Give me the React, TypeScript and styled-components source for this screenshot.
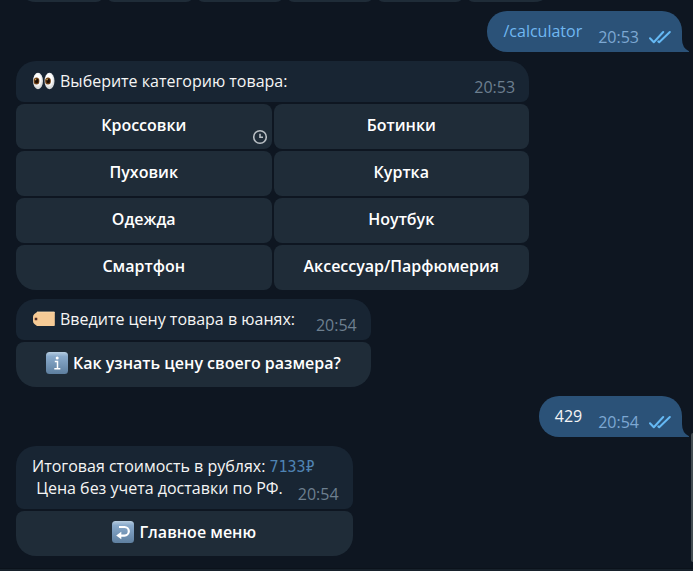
import React from "react";
import styled, { createGlobalStyle } from "styled-components";

const Global = createGlobalStyle`
  *, *::before, *::after { box-sizing: border-box; }
  body {
    margin: 0;
    background: #0e1621;
    color: #f5f5f5;
    font: 16px/22px "Open Sans", "Noto Sans", sans-serif;
  }
`;

const Page = styled.div`
  position: relative;
  min-height: 100vh;
  display: flex;
  flex-direction: column;
  overflow: hidden;
`;

const Chat = styled.main`
  flex: 1;
  display: flex;
  flex-direction: column;
  gap: 9px;
  padding: 0 11px 12px 16px;
`;

const ClippedRow = styled.div`
  display: grid;
  grid-template-columns: repeat(6, 1fr);
  gap: 2px;
  align-content: end;
  width: 100%;
  max-width: 538px;
  height: 2px;
  overflow: hidden;
`;

const ClippedKey = styled.div`
  height: 45px;
  border-radius: 8px;
  background: #1f2c38;
  &:first-child { border-bottom-left-radius: 20px; }
  &:last-child { border-bottom-right-radius: 20px; }
`;

const Card = styled.section`
  align-self: flex-start;
  display: flex;
  flex-direction: column;
  gap: 2px;
  max-width: 100%;
`;

const CardHead = styled.div`
  padding: 9px 14px 4px 16px;
  border-radius: 20px 20px 8px 8px;
  background: #182533;
`;

const Line = styled.div`
  height: 22px;
`;

const LastLine = styled.div`
  display: flex;
  justify-content: space-between;
  align-items: flex-end;
  gap: 15px;
`;

const MessageText = styled.p`
  display: flex;
  align-items: center;
  gap: 5px;
  margin: 0 0 6px;
  white-space: pre-wrap;
`;

const Time = styled.time<{ $own?: boolean }>`
  color: ${(p) => (p.$own ? "#7da8d3" : "#6d7f8f")};
`;

const Price = styled.code`
  color: #4f83b3;
  font-family: "DejaVu Sans Mono", monospace;
  font-size: 15px;
  line-height: 1;
`;

const Keyboard = styled.div<{ $columns: number }>`
  display: grid;
  grid-template-columns: repeat(${(p) => p.$columns}, 1fr);
  gap: 2px;
  border-radius: 0 0 20px 20px;
  overflow: hidden;
`;

const Key = styled.button`
  position: relative;
  display: flex;
  align-items: center;
  justify-content: center;
  gap: 5px;
  min-height: 45px;
  padding: 10px 30px 13px;
  border: 0;
  border-radius: 8px;
  background: #1f2c38;
  color: #ffffff;
  font: inherit;
  font-weight: 600;
  cursor: pointer;
  &:hover { background: #263542; }
`;

const Pending = styled.svg`
  position: absolute;
  right: 4px;
  bottom: 4px;
`;

const OwnBubble = styled.section`
  position: relative;
  align-self: flex-end;
  display: flex;
  align-items: flex-end;
  padding: 9px 11px 4px 16px;
  border-radius: 20px 20px 0 20px;
  background: #2b5278;
`;

const OwnText = styled.span`
  margin: 0 16px 6px 0;
`;

const Command = styled.a`
  margin: 0 16px 6px 0;
  color: #70b8f2;
  text-decoration: none;
`;

const Checks = styled.svg`
  margin: 0 0 4px 10px;
`;

const Tail = styled.svg`
  position: absolute;
  left: 100%;
  bottom: 0;
`;

const ScrollThumb = styled.div`
  position: absolute;
  right: 0;
  bottom: 9px;
  width: 2px;
  height: 129px;
  border-radius: 2px 0 0 2px;
  background: #434d53;
`;

const Composer = styled.footer`
  height: 3px;
  background: #17212b;
  border-top: 1px solid #0b121b;
`;

const Eyes = () => (
  <svg width="23" height="22" viewBox="0 0 23 22" aria-hidden="true">
    <defs>
      <radialGradient id="eyeWhite" cx="45%" cy="40%">
        <stop offset="0.6" stopColor="#ffffff" />
        <stop offset="1" stopColor="#d9dbdc" />
      </radialGradient>
    </defs>
    {[0, 11.5].map((x) => (
      <g key={x}>
        <ellipse cx={x + 6} cy="11" rx="5" ry="8.2" fill="url(#eyeWhite)" />
        <ellipse cx={x + 4.5} cy="11" rx="2.9" ry="3.5" fill="#704015" />
        <ellipse cx={x + 4.7} cy="11" rx="1.8" ry="2.3" fill="#1c0d04" />
        <circle cx={x + 3.6} cy="9.6" r="0.8" fill="#d0a95a" />
      </g>
    ))}
  </svg>
);

const Tag = () => (
  <svg width="23" height="22" viewBox="0 0 23 22" aria-hidden="true">
    <path d="M5 4h17q.8 0 .8.8v12.4q0 .8-.8.8H5L2.4 16Q1 14.8 1 13V9q0-1.800 1.400-3Z" fill="#f6cb96" />
    <path d="M5 4h17q.8 0 .8.8" fill="none" stroke="#ffe0b5" strokeWidth="0.8" />
    <circle cx="4" cy="11" r="2" fill="#e5ad7b" />
    <circle cx="4" cy="11" r="1.3" fill="#4b302a" />
  </svg>
);

const BlueTile = ({ id, children }: { id: string; children: React.ReactNode }) => (
  <svg width="22" height="22" viewBox="0 0 22 22" aria-hidden="true">
    <defs>
      <linearGradient id={id} x1="0" y1="0" x2="0" y2="1">
        <stop offset="0" stopColor="#b7cde0" />
        <stop offset="0.2" stopColor="#89aacb" />
        <stop offset="1" stopColor="#5e7f9f" />
      </linearGradient>
    </defs>
    <rect width="22" height="22" rx="3.500" fill={`url(#${id})`} />
    {children}
  </svg>
);

const InfoIcon = () => (
  <BlueTile id="infoTile">
    <circle cx="11.200" cy="5.900" r="1.500" fill="#fff" />
    <path d="M8.800 9.400h2.700v7.300M8.300 16.800h6" fill="none" stroke="#fff" strokeWidth="1.500" />
  </BlueTile>
);

const BackIcon = () => (
  <BlueTile id="backTile">
    <path d="M7 6h5.500a4.300 4.300 0 0 1 0 8.600H8" fill="none" stroke="#fff" strokeWidth="2.200" />
    <path d="M9.300 10.800v7.400L4.200 14.500Z" fill="#fff" />
  </BlueTile>
);

const ReadMark = () => (
  <Checks width="22" height="14" viewBox="0 0 22 14" role="img" aria-label="Прочитано">
    <path
      d="M1 8.200l3.800 4L14.200 2M9.300 11.400l.9.800L20.800 2"
      fill="none"
      stroke="#65b9f4"
      strokeWidth="2"
      strokeLinecap="round"
      strokeLinejoin="round"
    />
  </Checks>
);

const BubbleTail = () => (
  <Tail width="7" height="13" viewBox="0 0 7 13" aria-hidden="true">
    <path d="M0 0Q0 9 7 12.200V13H0Z" fill="#2b5278" />
  </Tail>
);

const categories = [
  "Кроссовки",
  "Ботинки",
  "Пуховик",
  "Куртка",
  "Одежда",
  "Ноутбук",
  "Смартфон",
  "Аксессуар/Парфюмерия",
];

export default function App() {
  return (
    <>
      <Global />
      <Page>
        <Chat>
          <ClippedRow>
            {[1, 2, 3, 4, 5, 6].map((n) => (
              <ClippedKey key={n} />
            ))}
          </ClippedRow>

          <OwnBubble>
            <Command href="#calculator">/calculator</Command>
            <Time $own>20:53</Time>
            <ReadMark />
            <BubbleTail />
          </OwnBubble>

          <Card>
            <CardHead>
              <LastLine>
                <MessageText>
                  <Eyes />
                  Выберите категорию товара:
                </MessageText>
                <Time>20:53</Time>
              </LastLine>
            </CardHead>
            <Keyboard $columns={2}>
              {categories.map((name, i) => (
                <Key key={name} type="button">
                  {name}
                  {i === 0 && (
                    <Pending width="16" height="16" viewBox="0 0 16 16" aria-hidden="true">
                      <circle cx="8" cy="8" r="6.300" fill="none" stroke="#b9bfc4" strokeWidth="1.600" />
                      <path d="M8 4.800V8.300h3" fill="none" stroke="#b9bfc4" strokeWidth="1.600" />
                    </Pending>
                  )}
                </Key>
              ))}
            </Keyboard>
          </Card>

          <Card>
            <CardHead>
              <LastLine>
                <MessageText>
                  <Tag />
                  Введите цену товара в юанях:
                </MessageText>
                <Time>20:54</Time>
              </LastLine>
            </CardHead>
            <Keyboard $columns={1}>
              <Key type="button">
                <InfoIcon />
                Как узнать цену своего размера?
              </Key>
            </Keyboard>
          </Card>

          <OwnBubble>
            <OwnText>429</OwnText>
            <Time $own>20:54</Time>
            <ReadMark />
            <BubbleTail />
          </OwnBubble>

          <Card>
            <CardHead>
              <Line>
                Итоговая стоимость в рублях: <Price>7133₽</Price>
              </Line>
              <LastLine>
                <MessageText>{" Цена без учета доставки по РФ."}</MessageText>
                <Time>20:54</Time>
              </LastLine>
            </CardHead>
            <Keyboard $columns={1}>
              <Key type="button">
                <BackIcon />
                Главное меню
              </Key>
            </Keyboard>
          </Card>
        </Chat>
        <Composer />
        <ScrollThumb />
      </Page>
    </>
  );
}
